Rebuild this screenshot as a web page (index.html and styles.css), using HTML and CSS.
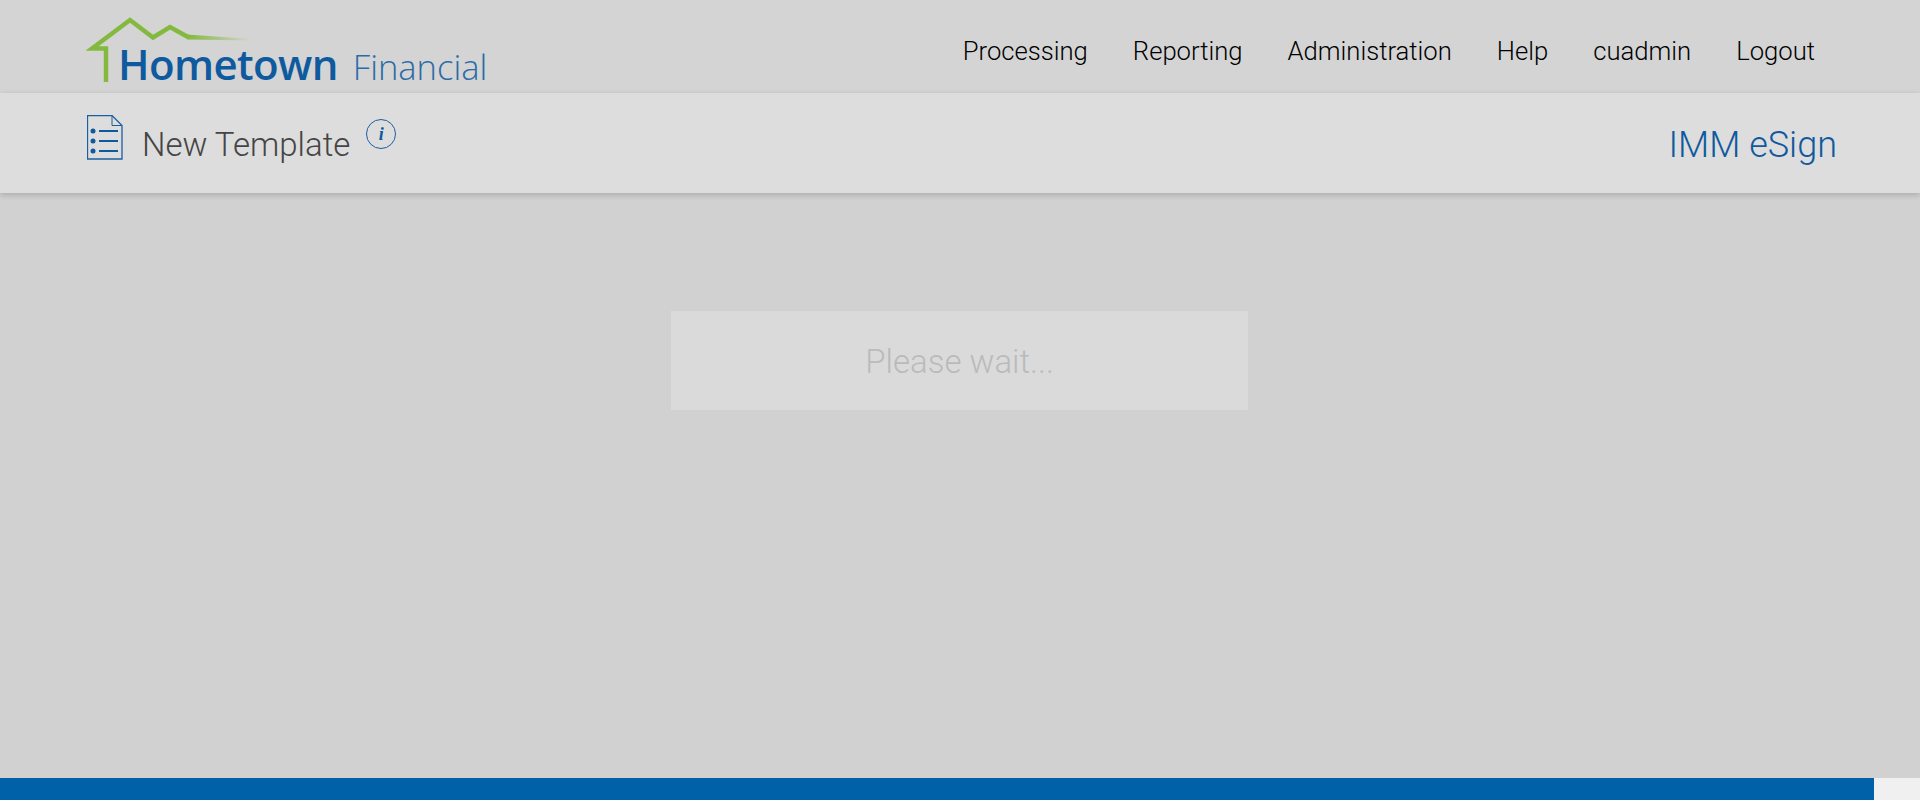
FILE: index.html
```html
<!DOCTYPE html>
<html lang="en">
<head>
<meta charset="utf-8">
<title>New Template</title>
<link rel="stylesheet" href="styles.css">
</head>
<body>
<header class="topbar">
  <a class="logo" href="#">
    <svg class="logo-house" width="170" height="74" viewBox="0 0 170 74" aria-hidden="true">
      <defs>
        <linearGradient id="fade" x1="0" x2="1" y1="0" y2="0">
          <stop offset="0" stop-color="#84b93f"/>
          <stop offset="1" stop-color="#84b93f" stop-opacity="0"/>
        </linearGradient>
      </defs>
      <path d="M20 67V33.500H6L44 5L67 22.500L84 12L102 22" fill="none" stroke="#84b93f" stroke-width="4.500"/>
      <path d="M101 19.500L166 24V25.500L101 24.500Z" fill="url(#fade)"/>
    </svg>
    <span class="logo-main">Hometown</span>
    <span class="logo-sub">Financial</span>
  </a>
  <nav class="nav">
    <a href="#">Processing</a>
    <a href="#">Reporting</a>
    <a href="#">Administration</a>
    <a href="#">Help</a>
    <a href="#">cuadmin</a>
    <a href="#">Logout</a>
  </nav>
</header>
<section class="subbar">
  <div class="title-group">
    <svg class="doc-icon" width="36" height="45" viewBox="0 0 36 45" aria-hidden="true">
      <path d="M.5.5H25L35 10.500V44H.5Z" fill="none" stroke="#1b5f9e" stroke-width="1.300"/>
      <path d="M25 .5V10.500H35" fill="none" stroke="#1b5f9e"/>
      <g fill="#0f5a9e">
        <circle cx="6" cy="16" r="2.500"/>
        <circle cx="6" cy="26" r="2.500"/>
        <circle cx="6" cy="36" r="2.500"/>
        <rect x="12" y="15" width="19" height="2"/>
        <rect x="12" y="25" width="19" height="2"/>
        <rect x="12" y="35" width="19" height="2"/>
      </g>
    </svg>
    <h1 class="page-title">New Template</h1>
    <span class="info-badge">i</span>
  </div>
  <div class="app-name">IMM eSign</div>
</section>
<main class="content">
  <div class="wait-box">Please wait...</div>
</main>
<footer class="footer">
  <div class="footer-bar"></div>
  <div class="footer-end"></div>
</footer>
</body>
</html>
```
FILE: styles.css
```css
* { box-sizing: border-box; }
html, body { margin: 0; height: 100%; }
body {
  height: 800px;
  display: flex;
  flex-direction: column;
  background: #d1d1d1;
  font-family: Roboto, "Liberation Sans", sans-serif;
  overflow: hidden;
}
a { text-decoration: none; color: inherit; }

.topbar {
  height: 93px;
  flex: none;
  display: flex;
  justify-content: space-between;
  background: #d4d4d4;
  padding: 0 105px 0 86px;
}
.logo {
  position: relative;
  display: flex;
  align-items: baseline;
  width: 410px;
  padding: 44px 0 0 32px;
  line-height: 40px;
}
.logo-house { position: absolute; left: 0; top: 15px; }
.logo-main {
  font-family: "Open Sans", sans-serif;
  font-weight: 600;
  font-size: 42px;
  letter-spacing: -.6px;
  color: #0f5a9e;
}
.logo-sub {
  font-family: "Open Sans", sans-serif;
  font-weight: 300;
  font-size: 34.500px;
  margin-left: 15px;
  color: #2a6ca8;
}
.nav {
  display: flex;
  gap: 45px;
  padding-top: 35px;
  font-weight: 300;
  font-size: 25.650px;
  line-height: 32px;
  color: #000;
}

.subbar {
  height: 100px;
  flex: none;
  display: flex;
  justify-content: space-between;
  background: #dddddd;
  box-shadow: 0 2px 6px rgba(0, 0, 0, .18);
  padding: 0 83px 0 87px;
  position: relative;
}
.title-group { display: flex; align-items: flex-start; }
.doc-icon { margin-top: 22px; }
.page-title {
  margin: 32px 0 0 19px;
  font-weight: 300;
  font-size: 33px;
  line-height: 40px;
  color: #454545;
}
.info-badge {
  width: 30px;
  height: 30px;
  margin: 26px 0 0 16px;
  border: 1px solid #1b5f9e;
  border-radius: 50%;
  display: flex;
  align-items: center;
  justify-content: center;
  font-family: "Liberation Serif", serif;
  font-style: italic;
  font-weight: 700;
  font-size: 18px;
  color: #0f5a9e;
}
.app-name {
  margin-top: 32px;
  font-weight: 300;
  font-size: 36px;
  line-height: 40px;
  color: #0f5a9e;
}

.content {
  flex: 1;
  padding: 118px 0 0 671px;
}
.wait-box {
  width: 577px;
  height: 99px;
  padding-top: 1px;
  display: flex;
  align-items: center;
  justify-content: center;
  background: #dadada;
  font-weight: 300;
  font-size: 33px;
  color: #bababa;
}

.footer {
  height: 22px;
  flex: none;
  display: flex;
}
.footer-bar { flex: 1; background: #0060a8; }
.footer-end { width: 46px; background: #f0f0f0; }
```
